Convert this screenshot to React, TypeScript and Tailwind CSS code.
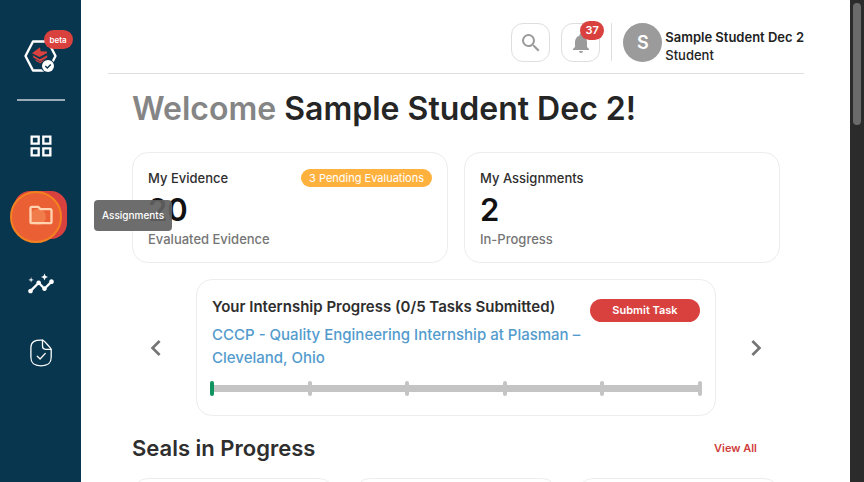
import React from "react";
import {
  MdChevronLeft,
  MdChevronRight,
  MdInsights,
  MdNotifications,
  MdOutlineFolder,
  MdOutlineGridView,
  MdSearch,
} from "react-icons/md";

const TASK_COUNT = 5;

function Logo() {
  return (
    <svg viewBox="0 0 34 34" className="h-[34px] w-[34px]" aria-hidden="true">
      <path
        d="M9 2.500h15L31.500 17 24 31.500H9L1.500 17Z"
        fill="none"
        stroke="#fff"
        strokeWidth="2.400"
        strokeLinejoin="round"
      />
      <path d="M8 14.300 16 8.300l.6 3.900 6.200.3.400 1.500-7.600 4Z" fill="#d9413f" />
      <path d="m8.800 16.300 7 3.900 7.400-4v2.300l-7.200 4-6.700-3.900Z" fill="#d9413f" />
      <path d="M11.500 20.500 16 23l5.500-2.800v1.300L16.200 24.300l-4.700-2.600Z" fill="#d9413f" />
      <circle cx="24" cy="27" r="7" fill="#09364f" />
      <circle cx="24" cy="27" r="6" fill="#fff" />
      <path d="m21.300 27 2 2 3.500-3.600" fill="none" stroke="#09364f" strokeWidth="1.400" />
    </svg>
  );
}

function DocumentCheckIcon() {
  return (
    <svg
      viewBox="0 0 24 28"
      className="h-7 w-6"
      fill="none"
      stroke="currentColor"
      strokeWidth="1.300"
      strokeLinecap="round"
      strokeLinejoin="round"
      aria-hidden="true"
    >
      <path d="M13.500 1.200C6.500.8 1.900 2.200 1.900 9v9c0 6.500 3 8.800 10.100 8.800S22.200 24.500 22.200 18v-7.500c0-1.200-7.500-9.100-8.700-9.300Z" />
      <path d="M13.500 1.200v5.900c0 2 1 3.200 3 3.200h5.500" />
      <path d="m8.300 17.300 2.800 2.700 5.200-5.600" />
    </svg>
  );
}

function NavButton({ label, children }: { label: string; children: React.ReactNode }) {
  return (
    <button aria-label={label} className="flex h-12 w-[53px] items-center justify-center text-white">
      {children}
    </button>
  );
}

function Sidebar() {
  return (
    <aside className="relative z-10 flex w-[81px] shrink-0 flex-col items-center bg-[#09364f] pt-[39px]">
      <div className="relative">
        <Logo />
        <span className="absolute -top-[9px] left-[20px] flex h-[19px] w-[29px] items-center justify-center rounded-full bg-[#d9413f] text-[8px] font-semibold text-white">
          beta
        </span>
      </div>
      <hr className="mt-[26px] w-12 border-t-2 border-[#9aabb5]" />
      <nav className="mt-[21px] flex flex-col gap-[21px]">
        <NavButton label="Dashboard">
          <MdOutlineGridView className="size-7" />
        </NavButton>
        <div className="relative">
          <button
            aria-label="Assignments"
            aria-describedby="assignments-tip"
            className="flex h-12 w-[53px] items-center justify-center rounded-2xl bg-[#d9413f]"
          >
            <span className="absolute top-0 -left-1 flex size-[52px] items-center justify-center rounded-full border-2 border-[#f58220] bg-[#ea5f33]">
              <span className="ml-1 size-4 rounded-full bg-[#f07c4c]" />
            </span>
            <MdOutlineFolder className="relative size-7 text-[#ffd3b0]" />
          </button>
          <span
            id="assignments-tip"
            role="tooltip"
            className="absolute top-[9px] left-[80px] flex h-[31px] w-[78px] items-center justify-center rounded bg-[#616161]/92 text-[10px] font-medium text-white"
          >
            Assignments
          </span>
        </div>
        <NavButton label="Insights">
          <MdInsights className="size-7" />
        </NavButton>
        <NavButton label="Documents">
          <DocumentCheckIcon />
        </NavButton>
      </nav>
    </aside>
  );
}

function Header() {
  return (
    <header className="ml-[27px] mr-[46px] flex h-[74px] items-start justify-end border-b border-[#dedede] pt-[23px]">
      <button
        aria-label="Search"
        className="flex size-[39px] items-center justify-center rounded-xl border border-[#dedede] text-[#9b9b9b]"
      >
        <MdSearch className="size-6" />
      </button>
      <button
        aria-label="Notifications"
        className="relative ml-[11px] flex size-[39px] items-center justify-center rounded-xl border border-[#dedede] text-[#9b9b9b]"
      >
        <MdNotifications className="size-6" />
        <span className="absolute -top-[3px] left-[18px] flex h-[19px] w-6 items-center justify-center rounded-full bg-[#d9413f] text-[11px] font-semibold text-white">
          37
        </span>
      </button>
      <div className="ml-[11px] h-[38px] w-px bg-[#dedede]" />
      <div className="ml-[11px] flex size-[39px] items-center justify-center rounded-full bg-[#9b9b9b] text-lg font-semibold text-white">
        S
      </div>
      <div className="ml-[3px] mt-[5px] text-[13px] leading-[18px] text-[#222]">
        <p className="font-semibold">Sample Student Dec 2</p>
        <p className="font-medium">Student</p>
      </div>
    </header>
  );
}

function StatCard({
  title,
  value,
  caption,
  badge,
}: {
  title: string;
  value: number;
  caption: string;
  badge?: string;
}) {
  return (
    <section className="rounded-2xl border border-[#ededed] px-[15px] pt-[15px] pb-[13px]">
      <div className="flex items-center justify-between">
        <h2 className="text-[13px] leading-5 font-medium text-[#2e2e2e]">{title}</h2>
        {badge && (
          <span className="flex h-[18px] items-center rounded-full bg-[#ffb13d] px-2 text-[11px] text-white">
            {badge}
          </span>
        )}
      </div>
      <p className="mt-[3px] text-[31px] leading-[38px] font-semibold text-[#111]">{value}</p>
      <p className="text-[13px] leading-5 font-medium text-[#757575]">{caption}</p>
    </section>
  );
}

function ProgressTrack() {
  return (
    <div className="-mx-[2px] mt-3 flex items-center" role="img" aria-label="0 of 5 tasks submitted">
      <span className="h-[15px] w-1 rounded-xs bg-[#0f9460]" />
      {Array.from({ length: TASK_COUNT }, (_, i) => (
        <React.Fragment key={i}>
          <span className="h-[7px] flex-1 bg-[#c4c4c4]" />
          <span className="h-[15px] w-1 rounded-xs bg-[#c4c4c4]" />
        </React.Fragment>
      ))}
    </div>
  );
}

function Internship() {
  return (
    <div className="mt-4 flex items-center">
      <button aria-label="Previous" className="flex w-16 justify-center pr-4 text-[#757575]">
        <MdChevronLeft className="size-8" />
      </button>
      <section className="flex-1 rounded-2xl border border-[#ededed] px-[15px] pt-[15px] pb-[19px]">
        <div className="flex items-start justify-between">
          <div className="flex-1">
            <h2 className="text-[15px] leading-6 font-semibold text-[#2e2e2e]">
              Your Internship Progress (0/5 Tasks Submitted)
            </h2>
            <a href="#internship" className="mt-1 block text-[15px] leading-[23px] font-medium text-[#539bcd]">
              CCCP - Quality Engineering Internship at Plasman –
              <br />
              Cleveland, Ohio
            </a>
          </div>
          <button className="mt-1 h-[23px] w-[110px] shrink-0 rounded-full bg-[#d9413f] text-[11px] font-semibold text-white">
            Submit Task
          </button>
        </div>
        <ProgressTrack />
      </section>
      <button aria-label="Next" className="flex w-16 justify-center pl-4 text-[#757575]">
        <MdChevronRight className="size-8" />
      </button>
    </div>
  );
}

export default function App() {
  return (
    <div className="flex h-screen overflow-hidden bg-white font-['Inter','Liberation_Sans',sans-serif]">
      <Sidebar />
      <div className="min-w-0 flex-1">
        <Header />
        <main className="pt-[15px] pr-[70px] pl-[51px]">
          <h1 className="text-[32px] leading-10 font-semibold whitespace-nowrap text-[#252525]">
            <span className="text-[#858585]">Welcome</span> Sample Student Dec 2!
          </h1>
          <div className="mt-[23px] grid grid-cols-2 gap-4">
            <StatCard title="My Evidence" value={20} caption="Evaluated Evidence" badge="3 Pending Evaluations" />
            <StatCard title="My Assignments" value={2} caption="In-Progress" />
          </div>
          <Internship />
          <div className="mt-4 flex items-center justify-between pr-[23px]">
            <h2 className="text-[22px] leading-8 font-semibold text-[#2e2e2e]">Seals in Progress</h2>
            <a href="#seals" className="text-[11px] font-semibold text-[#cf3d3b]">
              View All
            </a>
          </div>
          <div className="mt-[14px] grid grid-cols-3 gap-[19px]">
            <div className="h-28 rounded-2xl border border-[#ededed]" />
            <div className="h-28 rounded-2xl border border-[#ededed]" />
            <div className="h-28 rounded-2xl border border-[#ededed]" />
          </div>
        </main>
      </div>
      <div className="w-[14px] shrink-0 bg-[#2b2b2b] px-[3px] pt-[3px]">
        <div className="h-[122px] rounded-full bg-[#6b6b6b]" />
      </div>
    </div>
  );
}
